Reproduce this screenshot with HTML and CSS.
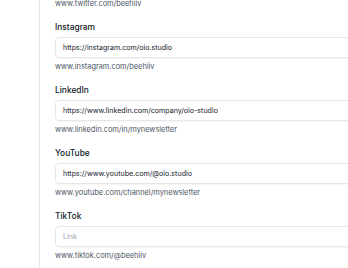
FILE: index.html
```
<!DOCTYPE html>
<html lang="en">
<head>
    <meta charset="UTF-8">
    <meta name="viewport" content="width=device-width, initial-scale=1.0">
    <title>Social links</title>
    <link rel="stylesheet" href="styles.css">
</head>
<body>
    <div class="panel">
        <p class="hint first">www.twitter.com/beehiiv</p>

        <div class="field">
            <label for="instagram">Instagram</label>
            <input type="text" id="instagram" value="https://instagram.com/oio.studio" placeholder="Link">
            <p class="hint">www.instagram.com/beehiiv</p>
        </div>

        <div class="field">
            <label for="linkedin">LinkedIn</label>
            <input type="text" id="linkedin" value="https://www.linkedin.com/company/oio-studio" placeholder="Link">
            <p class="hint">www.linkedin.com/in/mynewsletter</p>
        </div>

        <div class="field">
            <label for="youtube">YouTube</label>
            <input type="text" id="youtube" value="https://www.youtube.com/@oio.studio" placeholder="Link">
            <p class="hint">www.youtube.com/channel/mynewsletter</p>
        </div>

        <div class="field">
            <label for="tiktok">TikTok</label>
            <input type="text" id="tiktok" value="" placeholder="Link">
            <p class="hint">www.tiktok.com/@beehiiv</p>
        </div>
    </div>
</body>
</html>
```

FILE: styles.css
```
body {
    font-family: Inter, "Noto Sans", sans-serif;
    margin: 0;
    padding: 0;
    background-color: #ffffff;
    color: #1f2937;
    overflow: hidden;
}

.panel {
    margin-left: 39px;
    width: 400px;
    min-height: 300px;
    border-left: 1px solid #e5e7eb;
    padding-left: 15px;
    margin-top: -2px;
}

.hint {
    margin: 3px 0 0;
    font-size: 7.4px;
    line-height: 12px;
    color: #4b5563;
}

.hint.first {
    margin-top: 0;
}

.field {
    margin-top: 10px;
}

label {
    display: block;
    font-size: 8.4px;
    line-height: 14px;
    font-weight: 500;
    color: #111827;
    margin-bottom: 3px;
}

input[type="text"] {
    display: block;
    box-sizing: border-box;
    width: 340px;
    height: 21px;
    padding: 0 7px;
    border: 1px solid #e5e7eb;
    border-radius: 4px;
    box-shadow: 0 1px 1px rgba(0, 0, 0, 0.04);
    font-family: inherit;
    font-size: 7.1px;
    color: #111827;
    background: #fff;
}

input::placeholder {
    color: #9ca3af;
}
```
